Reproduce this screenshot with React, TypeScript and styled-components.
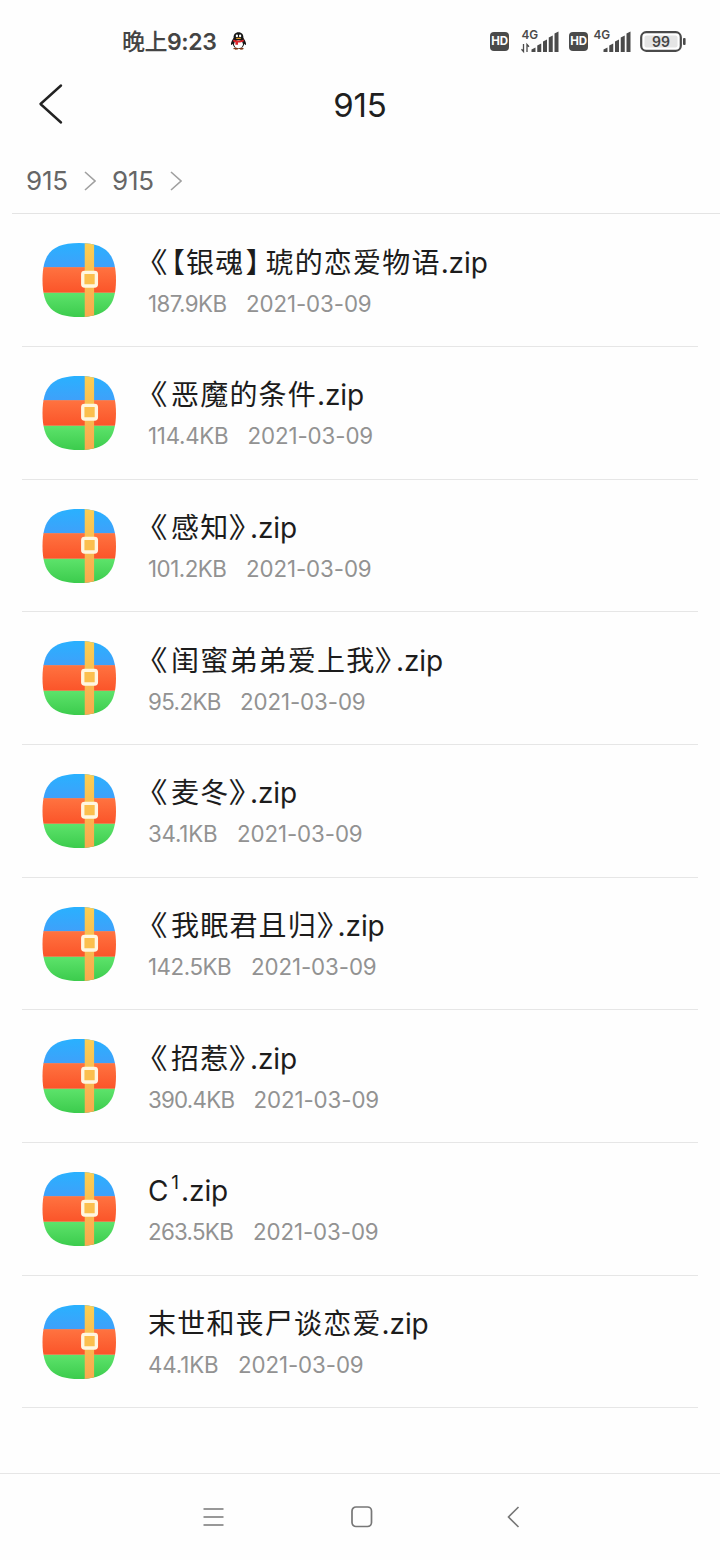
import React from "react";
import styled, { createGlobalStyle } from "styled-components";

const Global = createGlobalStyle`
  * { box-sizing: border-box; }
  html, body { margin: 0; background: #fefefe; }
  body { font-family: Inter, "Noto Sans CJK SC", sans-serif; }
`;

const Screen = styled.div`
  width: 720px;
  height: 1560px;
  display: flex;
  flex-direction: column;
  overflow: hidden;
`;

const StatusBar = styled.header`
  height: 82px;
  padding: 0 34px 0 122px;
  display: flex;
  align-items: center;
  color: #444;
  flex: none;
`;

const Clock = styled.div`
  font-size: 23px;
  font-weight: 600;
  line-height: 30px;
  letter-spacing: -0.45px;
  margin: 2px 14px 0 0;
  white-space: nowrap;
`;

const ClockPeriod = styled.span`
  font-weight: 500;
`;

const StatusIcons = styled.div`
  margin-left: auto;
  display: flex;
  align-items: center;
`;

const HdBadge = styled.span`
  width: 19px;
  height: 19px;
  border-radius: 4px;
  background: #4a4a4a;
  color: #fff;
  font-size: 11.5px;
  font-weight: 700;
  line-height: 19px;
  text-align: center;
  letter-spacing: -0.2px;
`;

const SignalBox = styled.svg<{ $before: number; $after: number }>`
  margin: 0 ${(p) => p.$after}px 0 ${(p) => p.$before}px;
  font-family: Inter, sans-serif;
`;

const TitleBar = styled.div`
  height: 66px;
  padding: 0 38px;
  display: grid;
  grid-template-columns: 60px 1fr 60px;
  align-items: start;
  flex: none;
`;

const BackIcon = styled.svg`
  margin-top: 1px;
`;

const Title = styled.h1`
  margin: 0;
  font-size: 33px;
  font-weight: 400;
  line-height: 46px;
  letter-spacing: -0.2px;
  text-align: center;
  color: #1f1f1f;
`;

const Crumbs = styled.nav`
  height: 66px;
  margin-left: 12px;
  padding-left: 14px;
  display: flex;
  align-items: center;
  border-bottom: 1px solid #e4e4e4;
  color: #666;
  font-size: 26px;
  flex: none;
`;

const Crumb = styled.span`
  width: 42px;
  letter-spacing: -0.2px;
`;

const CrumbArrowIcon = styled.svg`
  margin: 0 16px;
`;

const List = styled.ul`
  margin: 0;
  padding: 0.4px 22px 0;
  list-style: none;
  flex: 1;
`;

const Row = styled.li`
  height: 132.67px;
  padding: 29px 0 0 20px;
  display: flex;
  align-items: flex-start;
  border-bottom: 1px solid #e6e6e6;
`;

const Info = styled.div`
  margin: -0.6px 0 0 32px;
`;

const Name = styled.div`
  height: 42px;
  font-size: 28px;
  line-height: 41px;
  color: #1c1c1c;
  white-space: pre;
`;

const Han = styled.span`
  line-height: 0;
  letter-spacing: 1.2px;
`;

const Bracket = styled.span<{ $l: number; $r: number; $stretch: number }>`
  display: inline-block;
  line-height: 0;
  font-family: "Noto Sans CJK SC", sans-serif;
  font-feature-settings: "halt";
  margin: 0 ${(p) => p.$r}px 0 ${(p) => p.$l}px;
  transform: scaleX(${(p) => p.$stretch});
`;

const Latin = styled.span`
  line-height: 0;
  letter-spacing: -0.1px;
`;

const Sup = styled.span`
  display: inline-block;
  line-height: 0;
  margin: 0 2px 0 3px;
  font-size: 19px;
  transform: translateY(-12px);
`;

const Meta = styled.div`
  display: flex;
  gap: 20px;
  font-size: 22.3px;
  line-height: 38px;
  font-weight: 400;
  color: #929292;
`;

const Size = styled.span<{ $width: number; $tracking: number }>`
  width: ${(p) => p.$width}px;
  letter-spacing: ${(p) => p.$tracking}px;
  white-space: nowrap;
`;

const ModifiedDate = styled.span`
  letter-spacing: -0.1px;
`;

const NavBar = styled.footer`
  height: 87px;
  border-top: 1px solid #e6e6e6;
  display: flex;
  align-items: center;
  padding-left: 202px;
  flex: none;
`;

const NavButton = styled.button<{ $gap: number }>`
  width: 24px;
  height: 24px;
  padding: 0;
  border: 0;
  background: none;
  margin-right: ${(p) => p.$gap}px;
  svg { display: block; }
`;

type Part = { t: "han" | "open" | "box-open" | "close" | "box-close" | "latin" | "sup"; s: string };
const brackets = {
  open: [4, 5, 1.22],
  "box-open": [0, 1, 1],
  close: [1, 5.5, 1.22],
  "box-close": [1, 6, 1],
};
const open: Part = { t: "open", s: "《" };
const close: Part = { t: "close", s: "》" };
const zip: Part = { t: "latin", s: ".zip" };
const han = (s: string): Part => ({ t: "han", s });

const files: { name: Part[]; size: string; width: number; tracking: number }[] = [
  { name: [open, { t: "box-open", s: "【" }, han("银魂"), { t: "box-close", s: "】" }, han("琥的恋爱物语"), zip], size: "187.9KB", width: 78, tracking: -0.55 },
  { name: [open, han("恶魔的条件"), zip], size: "114.4KB", width: 79.5, tracking: -0.25 },
  { name: [open, han("感知"), close, zip], size: "101.2KB", width: 78, tracking: -0.5 },
  { name: [open, han("闺蜜弟弟爱上我"), close, zip], size: "95.2KB", width: 72, tracking: -0.6 },
  { name: [open, han("麦冬"), close, zip], size: "34.1KB", width: 69, tracking: -0.2 },
  { name: [open, han("我眠君且归"), close, zip], size: "142.5KB", width: 83, tracking: -0.45 },
  { name: [open, han("招惹"), close, zip], size: "390.4KB", width: 85.5, tracking: -0.75 },
  { name: [{ t: "latin", s: "C" }, { t: "sup", s: "1" }, zip], size: "263.5KB", width: 85, tracking: -0.7 },
  { name: [han("末世和丧尸谈恋爱"), zip], size: "44.1KB", width: 70, tracking: -0.1 },
];

function NamePart({ part }: { part: Part }) {
  if (part.t === "han") return <Han>{part.s}</Han>;
  if (part.t === "latin") return <Latin>{part.s}</Latin>;
  if (part.t === "sup") return <Sup>{part.s}</Sup>;
  const [l, r, stretch] = brackets[part.t];
  return <Bracket $l={l} $r={r} $stretch={stretch}>{part.s}</Bracket>;
}

function ZipIcon() {
  return (
    <svg width="74" height="74" viewBox="0 0 75 75">
      <defs>
        <clipPath id="tile">
          <path d="M37.500 0C64.500 0 75 10.500 75 37.500S64.500 75 37.500 75 .5 64.500 .5 37.500 10.500 0 37.500 0Z" />
        </clipPath>
        <linearGradient id="blue" x1="0" y1="0" x2="0" y2="1"><stop stopColor="#29b1ff" /><stop offset="1" stopColor="#3fa0fa" /></linearGradient>
        <linearGradient id="red" x1="0" y1="0" x2="0" y2="1"><stop stopColor="#ff7340" /><stop offset="1" stopColor="#fb5429" /></linearGradient>
        <linearGradient id="green" x1="0" y1="0" x2="0" y2="1"><stop stopColor="#5de36b" /><stop offset="1" stopColor="#3bcb4c" /></linearGradient>
        <linearGradient id="strap" x1="0" y1="0" x2="0" y2="1"><stop stopColor="#fbce52" /><stop offset="1" stopColor="#f9a94f" /></linearGradient>
      </defs>
      <g clipPath="url(#tile)">
        <rect width="75" height="25" fill="url(#blue)" />
        <rect y="24.500" width="75" height="26" fill="url(#red)" />
        <rect y="50.500" width="75" height="25" fill="url(#green)" />
        <rect x="43.300" width="9.500" height="75" fill="url(#strap)" />
      </g>
      <rect x="41.300" y="29.800" width="13.800" height="13.800" rx="1.800" fill="#fbbf4d" stroke="#fff6e0" strokeWidth="3.400" />
    </svg>
  );
}

function Penguin() {
  return (
    <svg width="17" height="20" viewBox="0 0 18 20">
      <path d="M9 .8C5.500 .8 3.800 3.300 3.800 6.500 2.800 8.500 1 11 1 13.200c0 1.300 1 1.200 1.800-.2C3.800 17 6 18.200 9 18.200s5.200-1.200 6.200-5.200c.8 1.400 1.800 1.500 1.800.2C17 11 15.200 8.500 14.200 6.500 14.200 3.300 12.500 .8 9 .8Z" fill="#161616" />
      <ellipse cx="9" cy="13.500" rx="4.700" ry="4.300" fill="#fff" />
      <ellipse cx="7.300" cy="4.600" rx="1.200" ry="1.500" fill="#fff" />
      <ellipse cx="10.700" cy="4.600" rx="1.200" ry="1.500" fill="#fff" />
      <ellipse cx="9" cy="7.200" rx="3" ry=".7" fill="#f5a623" />
      <path d="M3.700 8.300c3.500 1.700 7 1.700 10.600 0l.5 2c-2 1-4 1.300-6.300 1.300V14H5.700v-2.700c-1-.2-1.800-.5-2.500-1Z" fill="#e0252b" />
      <path d="M3.500 18.300c0-1.500 5-1.500 5.300 0 .2 1.200-5.300 1.200-5.300 0Zm5.700 0c.3-1.500 5.300-1.500 5.300 0 0 1.200-5.500 1.200-5.300 0Z" fill="#7a3a18" />
    </svg>
  );
}

function Signal({ data, before, after }: { data?: boolean; before: number; after: number }) {
  return (
    <SignalBox $before={before} $after={after} width="38" height="26" viewBox="0 0 38 26" fill="#4a4a4a">
      <text x="0.500" y="11" fontSize="11.800" fontWeight="600">4G</text>
      {data && <path d="M2.500 16v7.500L.5 21.300M6 24v-7.500l2 2.200" fill="none" stroke="#4a4a4a" strokeWidth="1.300" />}
      {[0, 1, 2, 3, 4].map((i) => (
        <path key={i} d={`M${10.500 + i * 5.750} 24v${-2.500 - i * 4}l4-2v${4.500 + i * 4}z`} />
      ))}
    </SignalBox>
  );
}

function Battery() {
  return (
    <svg width="46" height="21" viewBox="0 0 46 21">
      <rect x="1.200" y="1.200" width="39.600" height="18.600" rx="5" fill="#fff" stroke="#4a4a4a" strokeWidth="2.200" />
      <rect x="4.500" y="4.500" width="33" height="12" rx="2" fill="#e4e4e4" />
      <rect x="43" y="7" width="2.600" height="7" rx="1" fill="#4a4a4a" />
      <text x="21" y="15.500" fontSize="14" fontWeight="600" fill="#444" textAnchor="middle" fontFamily="Inter, sans-serif">99</text>
    </svg>
  );
}

const CrumbArrow = () => (
  <CrumbArrowIcon width="12" height="20" viewBox="0 0 12 20">
    <path d="M1 1l10 9-10 9" fill="none" stroke="#a0a0a0" strokeWidth="1.600" />
  </CrumbArrowIcon>
);

export default function App() {
  return (
    <Screen>
      <Global />
      <StatusBar>
        <Clock><ClockPeriod>晚上</ClockPeriod>9:23</Clock>
        <Penguin />
        <StatusIcons>
          <HdBadge>HD</HdBadge>
          <Signal data before={12} after={10} />
          <HdBadge>HD</HdBadge>
          <Signal before={5} after={9} />
          <Battery />
        </StatusIcons>
      </StatusBar>
      <TitleBar>
        <BackIcon width="26" height="42" viewBox="0 0 26 42">
          <path d="M23 2.500L2.500 21 23 39.500" fill="none" stroke="#222" strokeWidth="2.400" strokeLinecap="round" strokeLinejoin="round" />
        </BackIcon>
        <Title>915</Title>
      </TitleBar>
      <Crumbs>
        <Crumb>915</Crumb>
        <CrumbArrow />
        <Crumb>915</Crumb>
        <CrumbArrow />
      </Crumbs>
      <List>
        {files.map((f) => (
          <Row key={f.size}>
            <ZipIcon />
            <Info>
              <Name>{f.name.map((p, i) => <NamePart key={i} part={p} />)}</Name>
              <Meta>
                <Size $width={f.width} $tracking={f.tracking}>{f.size}</Size>
                <ModifiedDate>2021-03-09</ModifiedDate>
              </Meta>
            </Info>
          </Row>
        ))}
      </List>
      <NavBar>
        <NavButton $gap={124} aria-label="Menu">
          <svg width="24" height="24" viewBox="0 0 24 24"><path d="M1.500 4h20M1.500 12h20M1.500 20h20" stroke="#777" strokeWidth="1.600" /></svg>
        </NavButton>
        <NavButton $gap={128} aria-label="Home">
          <svg width="24" height="24" viewBox="0 0 24 24"><rect x="2" y="2" width="19.500" height="19.500" rx="4" fill="none" stroke="#777" strokeWidth="1.700" /></svg>
        </NavButton>
        <NavButton $gap={0} aria-label="Back">
          <svg width="24" height="24" viewBox="0 0 24 24"><path d="M16.500 2L6.500 12l10 10" fill="none" stroke="#777" strokeWidth="1.600" /></svg>
        </NavButton>
      </NavBar>
    </Screen>
  );
}
